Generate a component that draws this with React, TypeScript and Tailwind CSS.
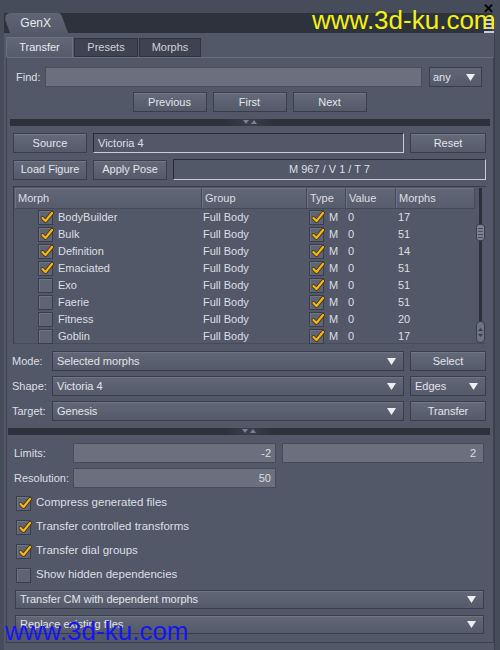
import React from "react";

const font = { fontFamily: '"Liberation Sans", Arial, sans-serif' };

function Check() {
  return (
    <svg width="16" height="15" viewBox="0 0 16 15" className="absolute left-[0px] top-[-1px]">
      <path d="M3.5 8 L6.5 11 L13 3" fill="none" stroke="#3a2f10" strokeWidth="3.8" strokeLinecap="round" strokeLinejoin="round" />
      <path d="M3.5 8 L6.5 11 L13 3" fill="none" stroke="#f5b514" strokeWidth="2.3" strokeLinecap="round" strokeLinejoin="round" />
    </svg>
  );
}

function Box({ checked }: { checked: boolean }) {
  return (
    <div className="relative w-[15px] h-[15px] shrink-0 bg-[#5f6474] border border-[#3a3e4a] shadow-[inset_1px_1px_0_#6e7383]">
      {checked && <Check />}
    </div>
  );
}

function Btn({ children, w }: { children: React.ReactNode; w: string }) {
  return (
    <div
      className={`${w} h-[20px] shrink-0 flex items-center justify-center border border-[#3a3e4a] bg-gradient-to-b from-[#656a7a] to-[#555a6a] shadow-[inset_0_1px_0_#737889] text-[#e2e4ea]`}
    >
      {children}
    </div>
  );
}

function Arrow() {
  return (
    <svg width="9" height="7" viewBox="0 0 9 7">
      <path d="M0 0 H9 L4.5 7 Z" fill="#eceef2" />
    </svg>
  );
}

function Drop({ children, cls }: { children: React.ReactNode; cls: string }) {
  return (
    <div
      className={`${cls} h-[20px] flex items-center justify-between pl-[4px] pr-[7px] border border-[#3a3e4a] bg-gradient-to-b from-[#626777] to-[#555a6a] shadow-[inset_0_1px_0_#6f7485] text-[#e2e4ea]`}
    >
      <span>{children}</span>
      <Arrow />
    </div>
  );
}

function Splitter({ cls }: { cls: string }) {
  return (
    <div className={`${cls} h-[7px] bg-[#2d313c] flex items-center justify-center`}>
      <div className="h-[7px] w-[50px] bg-gradient-to-r from-[#2d313c] via-[#3a3e4a] to-[#2d313c] flex items-center justify-center gap-[1px]">
        <svg width="14" height="5" viewBox="0 0 14 5">
          <path d="M0 0 H6 L3 4 Z" fill="#7d8292" />
          <path d="M8 4 H14 L11 0 Z" fill="#7d8292" />
        </svg>
      </div>
    </div>
  );
}

const rows = [
  { n: "BodyBuilder", c: true, m: "17" },
  { n: "Bulk", c: true, m: "51" },
  { n: "Definition", c: true, m: "14" },
  { n: "Emaciated", c: true, m: "51" },
  { n: "Exo", c: false, m: "51" },
  { n: "Faerie", c: false, m: "51" },
  { n: "Fitness", c: false, m: "20" },
  { n: "Goblin", c: false, m: "17" },
];

const grid = "grid grid-cols-[187px_105px_39px_50px_79px]";

export default function App() {
  return (
    <div style={font} className="relative w-[500px] h-[650px] overflow-hidden bg-[#474c5b] text-[11px] text-[#dcdee4] leading-none">
      {/* top strip */}
      <div className="h-[13px]" />
      {/* title bar */}
      <div className="ml-[4px] w-[488px] h-[20px] bg-[#2e323d] flex items-end">
        <div className="ml-[6px] w-[58px] h-[20px] bg-gradient-to-b from-[#5f6475] to-[#555a6a] rounded-tl-[8px] rounded-tr-[3px] skew-x-[20deg] origin-bottom flex items-center justify-center">
          <span className="skew-x-[-20deg] text-[12px] text-[#e6e8ee]">GenX</span>
        </div>
      </div>
      {/* window body */}
      <div className="ml-[4px] w-[491px] h-[617px] bg-[#535868] border-r border-[#3b3f4b] pt-[4px]">
        {/* tabs */}
        <div className="flex items-end h-[20px] ml-[2px]">
          <div className="w-[67px] h-[20px] bg-gradient-to-b from-[#626778] to-[#565b6b] border-t border-l border-r border-[#6c7182] flex items-center justify-center text-[#e6e8ee]">
            Transfer
          </div>
          <div className="w-[64px] h-[19px] ml-[1px] bg-[#3e4251] border border-[#2f333e] flex items-center justify-center text-[#cfd1d7]">
            Presets
          </div>
          <div className="w-[62px] h-[19px] ml-[1px] bg-[#3e4251] border border-[#2f333e] flex items-center justify-center text-[#cfd1d7]">
            Morphs
          </div>
        </div>
        {/* content panel */}
        <div className="ml-[2px] w-[488px] h-[586px] border border-[#3d4150] border-t-[#6a6f80] pl-[6px] pr-[7px] pt-[9px] flex flex-col">
          {/* find */}
          <div className="flex items-center h-[20px] ml-[3px] mr-[4px]">
            <span className="w-[29px]">Find:</span>
            <div className="flex-1 h-[20px] bg-[#6b6f7e] border border-[#4a4e5b]" />
            <div className="ml-[7px] w-[53px] h-[20px] flex items-center justify-between pl-[3px] pr-[6px] border border-[#3a3e4a] bg-gradient-to-b from-[#626777] to-[#555a6a] text-[#e2e4ea]">
              <span>any</span>
              <Arrow />
            </div>
          </div>
          {/* nav buttons */}
          <div className="flex justify-center gap-[6px] mt-[5px]">
            <Btn w="w-[74px]">Previous</Btn>
            <Btn w="w-[74px]">First</Btn>
            <Btn w="w-[74px]">Next</Btn>
          </div>
          <Splitter cls="mt-[7px] -ml-[3px] -mr-[4px]" />
          {/* source */}
          <div className="flex items-center gap-[6px] mt-[7px]">
            <Btn w="w-[74px]">Source</Btn>
            <div className="flex-1 h-[20px] bg-[#535868] border border-t-[#2a2d37] border-l-[#2a2d37] border-b-[#c9ccd4] border-r-[#c9ccd4] flex items-center pl-[4px]">
              Victoria 4
            </div>
            <Btn w="w-[76px]">Reset</Btn>
          </div>
          {/* load */}
          <div className="flex items-center gap-[6px] mt-[6px]">
            <Btn w="w-[74px]">Load Figure</Btn>
            <Btn w="w-[74px]">Apply Pose</Btn>
            <div className="flex-1 h-[21px] bg-[#535868] border border-t-[#2a2d37] border-l-[#2a2d37] border-b-[#c9ccd4] border-r-[#c9ccd4] flex items-center justify-center">
              M 967 / V 1 / T 7
            </div>
          </div>
          {/* table */}
          <div className="mt-[6px] h-[158px] border-t border-l border-[#3a3e4a] border-b border-b-[#484c5a] pl-[1px] pt-[1px] flex">
            <div className="w-[460px]">
              <div className={`${grid} h-[21px]`}>
                {["Morph", "Group", "Type", "Value", "Morphs"].map((h) => (
                  <div
                    key={h}
                    className="h-[21px] flex items-center pl-[3px] bg-gradient-to-b from-[#626777] to-[#585d6d] border-r border-b border-[#464a58] shadow-[inset_1px_1px_0_#6d7283]"
                  >
                    {h}
                  </div>
                ))}
              </div>
              {rows.map((r) => (
                <div key={r.n} className={`${grid} h-[17px]`}>
                  <div className="flex items-center pl-[23px] gap-[5px]">
                    <Box checked={r.c} />
                    <span>{r.n}</span>
                  </div>
                  <div className="flex items-center pl-[1px]">Full Body</div>
                  <div className="flex items-center pl-[2px] gap-[5px]">
                    <Box checked={true} />
                    <span>M</span>
                  </div>
                  <div className="flex items-center pl-[2px]">0</div>
                  <div className="flex items-center pl-[2px]">{r.m}</div>
                </div>
              ))}
            </div>
            {/* scrollbar */}
            <div className="w-[11px] relative flex justify-center">
              <div className="w-[3px] h-[155px] bg-[#2b2f39] mt-[0px]" />
              <div className="absolute top-[36px] left-[1px] w-[9px] h-[17px] rounded-[3px] bg-[#7c8191] border border-[#3a3e4a] flex flex-col items-center justify-center gap-[2px]">
                <div className="w-[5px] h-[1px] bg-[#4a4e5a]" />
                <div className="w-[5px] h-[1px] bg-[#4a4e5a]" />
                <div className="w-[5px] h-[1px] bg-[#4a4e5a]" />
                <div className="w-[5px] h-[1px] bg-[#4a4e5a]" />
              </div>
              <div className="absolute top-[133px] left-[1px] w-[9px] h-[22px] rounded-[4px] bg-[#6e7383] border border-[#3a3e4a] flex flex-col items-center justify-center gap-[3px]">
                <svg width="5" height="3" viewBox="0 0 5 3"><path d="M0 3 H5 L2.5 0 Z" fill="#3a3e4a" /></svg>
                <svg width="5" height="3" viewBox="0 0 5 3"><path d="M0 0 H5 L2.5 3 Z" fill="#3a3e4a" /></svg>
              </div>
            </div>
          </div>
          {/* mode/shape/target */}
          <div className="flex items-center mt-[7px] -ml-[1px]">
            <span className="w-[40px]">Mode:</span>
            <Drop cls="flex-1">Selected morphs</Drop>
            <div className="ml-[6px]"><Btn w="w-[76px]">Select</Btn></div>
          </div>
          <div className="flex items-center mt-[5px] -ml-[1px]">
            <span className="w-[40px]">Shape:</span>
            <Drop cls="flex-1">Victoria 4</Drop>
            <Drop cls="ml-[6px] w-[76px]">Edges</Drop>
          </div>
          <div className="flex items-center mt-[5px] -ml-[1px]">
            <span className="w-[40px]">Target:</span>
            <Drop cls="flex-1">Genesis</Drop>
            <div className="ml-[6px]"><Btn w="w-[76px]">Transfer</Btn></div>
          </div>
          <Splitter cls="mt-[7px] -ml-[5px] -mr-[4px]" />
          {/* limits */}
          <div className="flex items-center mt-[8px] ml-[1px] mr-[2px]">
            <span className="w-[59px]">Limits:</span>
            <div className="w-[203px] h-[20px] bg-[#6b6f7e] border border-[#474b58] flex items-center justify-end pr-[4px]">-2</div>
            <div className="ml-[6px] flex-1 h-[20px] bg-[#6b6f7e] border border-[#474b58] flex items-center justify-end pr-[7px]">2</div>
          </div>
          <div className="flex items-center mt-[5px] ml-[1px]">
            <span className="w-[59px]">Resolution:</span>
            <div className="w-[203px] h-[20px] bg-[#6b6f7e] border border-[#474b58] flex items-center justify-end pr-[4px]">50</div>
          </div>
          {/* checkboxes */}
          <div className="flex flex-col mt-[3px] ml-[3px]">
            {[
              ["Compress generated files", true],
              ["Transfer controlled transforms", true],
              ["Transfer dial groups", true],
              ["Show hidden dependencies", false],
            ].map(([t, c]) => (
              <div key={t as string} className="h-[24px] flex items-center gap-[5px]">
                <Box checked={c as boolean} />
                <span className="text-[11.5px]">{t as string}</span>
              </div>
            ))}
          </div>
          <Drop cls="mt-[3px] ml-[2px] mr-[2px] !h-[19px]">Transfer CM with dependent morphs</Drop>
          <Drop cls="mt-[6px] ml-[2px] mr-[2px] !h-[19px]">Replace existing files</Drop>
        </div>
      </div>
      {/* close and menu icons */}
      <div className="absolute top-[2px] left-[483px] text-[13px] text-black font-bold leading-none">✕</div>
      <div className="absolute top-[19px] left-[484px] flex flex-col gap-[2px]">
        <div className="w-[10px] h-[2px] bg-[#c9ccd4]" />
        <div className="w-[10px] h-[2px] bg-[#c9ccd4]" />
        <div className="w-[10px] h-[2px] bg-[#c9ccd4]" />
        <div className="w-[10px] h-[2px] bg-[#c9ccd4]" />
      </div>
      {/* watermarks */}
      <div className="absolute top-[7px] left-[312px] text-[26px] leading-none text-[#f4f20c]">www.3d-ku.com</div>
      <div className="absolute top-[618px] left-[5px] text-[26px] leading-none text-[#1616f0]">www.3d-ku.com</div>
    </div>
  );
}
